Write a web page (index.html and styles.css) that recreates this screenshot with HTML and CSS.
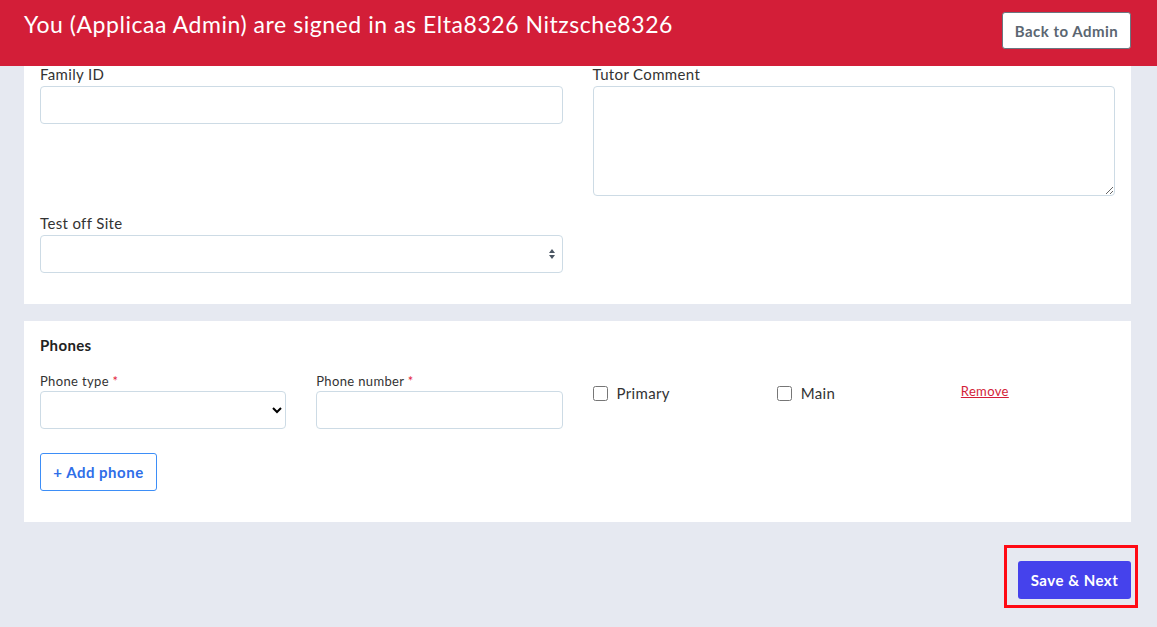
FILE: index.html
```html
<!DOCTYPE html>
<html>
<head>
  <meta charset="utf-8">
  <title>Student details</title>
  <link rel="stylesheet" href="styles.css">
</head>
<body>
  <div class="impersonate-bar">
    <span class="impersonate-text">You (Applicaa Admin) are signed in as Elta8326 Nitzsche8326</span>
    <button class="btn-back">Back to Admin</button>
  </div>

  <div class="page">
    <div class="card card-details">
      <div class="form-grid">
        <div class="form-group">
          <label class="field-label">Family ID</label>
          <input class="field" type="text">
        </div>
        <div class="form-group">
          <label class="field-label">Tutor Comment</label>
          <textarea class="field field-area"></textarea>
        </div>
        <div class="form-group">
          <label class="field-label">Test off Site</label>
          <div class="select-wrap">
            <select class="field field-select-custom">
              <option></option>
              <option>Yes</option>
              <option>No</option>
            </select>
            <svg class="select-arrows" width="8" height="12" viewBox="0 0 8 12">
              <path d="M4 1 L7 5 L1 5 Z" fill="#4a5562"/>
              <path d="M4 11 L7 7 L1 7 Z" fill="#4a5562"/>
            </svg>
          </div>
        </div>
      </div>
    </div>

    <div class="card card-phones">
      <h4 class="section-title">Phones</h4>
      <div class="phone-row">
        <div class="col-3">
          <label class="small-label">Phone type <span class="req">*</span></label>
          <select class="field field-select">
            <option></option>
            <option>Mobile</option>
            <option>Home</option>
            <option>Work</option>
          </select>
        </div>
        <div class="col-3">
          <label class="small-label">Phone number <span class="req">*</span></label>
          <input class="field" type="text">
        </div>
        <div class="col-2 check-cell">
          <label class="check"><input type="checkbox"> Primary</label>
        </div>
        <div class="col-2 check-cell">
          <label class="check"><input type="checkbox"> Main</label>
        </div>
        <div class="col-2 remove-cell">
          <a href="#" class="remove-link">Remove</a>
        </div>
      </div>
      <button class="btn-add">+ Add phone</button>
    </div>

    <div class="actions">
      <button class="btn-save">Save &amp; Next</button>
    </div>
  </div>
</body>
</html>
```

FILE: styles.css
```css
* {
  box-sizing: border-box;
}

body {
  margin: 0;
  font-family: Lato, "Open Sans", Arial, sans-serif;
  letter-spacing: 0.35px;
  background-color: #e6e9f1;
  color: #333;
}

.impersonate-bar {
  height: 66px;
  background-color: #d31e38;
  display: flex;
  justify-content: space-between;
  align-items: flex-start;
  padding: 10px 26px 0 24px;
}

.impersonate-text {
  color: #fff;
  font-size: 23px;
  line-height: 28px;
  letter-spacing: 0.55px;
}

.btn-back {
  margin-top: 2px;
  width: 129px;
  height: 37px;
  background: #fff;
  border: 1px solid #6b7680;
  border-radius: 3px;
  color: #5b6671;
  font-family: inherit;
  font-size: 15px;
  font-weight: 700;
  letter-spacing: 0.5px;
}

.page {
  padding: 0 26px 28px 24px;
}

.card {
  background: #fff;
  padding: 0 16px 31px 16px;
}

.card-details {
  padding-top: 0;
}

.form-grid {
  display: grid;
  grid-template-columns: 1fr 1fr;
  column-gap: 30px;
  row-gap: 19px;
}

.field-label {
  display: block;
  font-size: 15px;
  line-height: 16px;
  margin: 0 0 4px 0;
  color: #333;
}

.field {
  display: block;
  width: 100%;
  height: 38px;
  border: 1px solid #cddbe5;
  border-radius: 4px;
  background: #fff;
  font-family: inherit;
  font-size: 15px;
  padding: 0 12px;
}

.field-area {
  height: 110px;
  padding: 8px 12px;
}

.select-wrap {
  position: relative;
}

.field-select-custom {
  appearance: none;
  -webkit-appearance: none;
}

.select-arrows {
  position: absolute;
  right: 7px;
  top: 13px;
  pointer-events: none;
}

.card-phones {
  margin-top: 17px;
  padding-top: 14px;
}

.section-title {
  margin: 0 0 18px 0;
  font-size: 15px;
  line-height: 20px;
  font-weight: 700;
  color: #222;
}

.phone-row {
  display: grid;
  grid-template-columns: repeat(12, 1fr);
  column-gap: 30px;
}

.col-3 {
  grid-column: span 3;
}

.col-2 {
  grid-column: span 2;
}

.small-label {
  display: block;
  font-size: 13px;
  line-height: 16px;
  margin-bottom: 2px;
  color: #333;
}

.req {
  color: #e3243b;
}

.field-select {
  padding: 0 8px;
}

.check-cell {
  padding-top: 10px;
}

.check {
  display: flex;
  align-items: center;
  font-size: 15px;
  line-height: 20px;
  color: #333;
}

.check input {
  width: 15px;
  height: 15px;
  margin: 0 9px 0 0;
}

.remove-cell {
  padding-top: 7px;
}

.remove-link {
  color: #d31e38;
  font-size: 13px;
  line-height: 16px;
}

.btn-add {
  margin-top: 24px;
  width: 117px;
  height: 38px;
  background: #fff;
  border: 1px solid #3d8ef7;
  border-radius: 3px;
  color: #2f6ee8;
  font-family: inherit;
  font-size: 15px;
  font-weight: 700;
  letter-spacing: 0.5px;
}

.actions {
  display: flex;
  justify-content: flex-end;
  padding-top: 39px;
}

.btn-save {
  position: relative;
  width: 113px;
  height: 38px;
  background: #4542ec;
  border: none;
  border-radius: 3px;
  color: #fff;
  font-family: inherit;
  font-size: 15px;
  font-weight: 700;
  letter-spacing: 0.5px;
}

.btn-save::after {
  content: "";
  position: absolute;
  top: -16px;
  right: -7px;
  bottom: -9px;
  left: -14px;
  border: 3px solid #ff0a14;
}
```
